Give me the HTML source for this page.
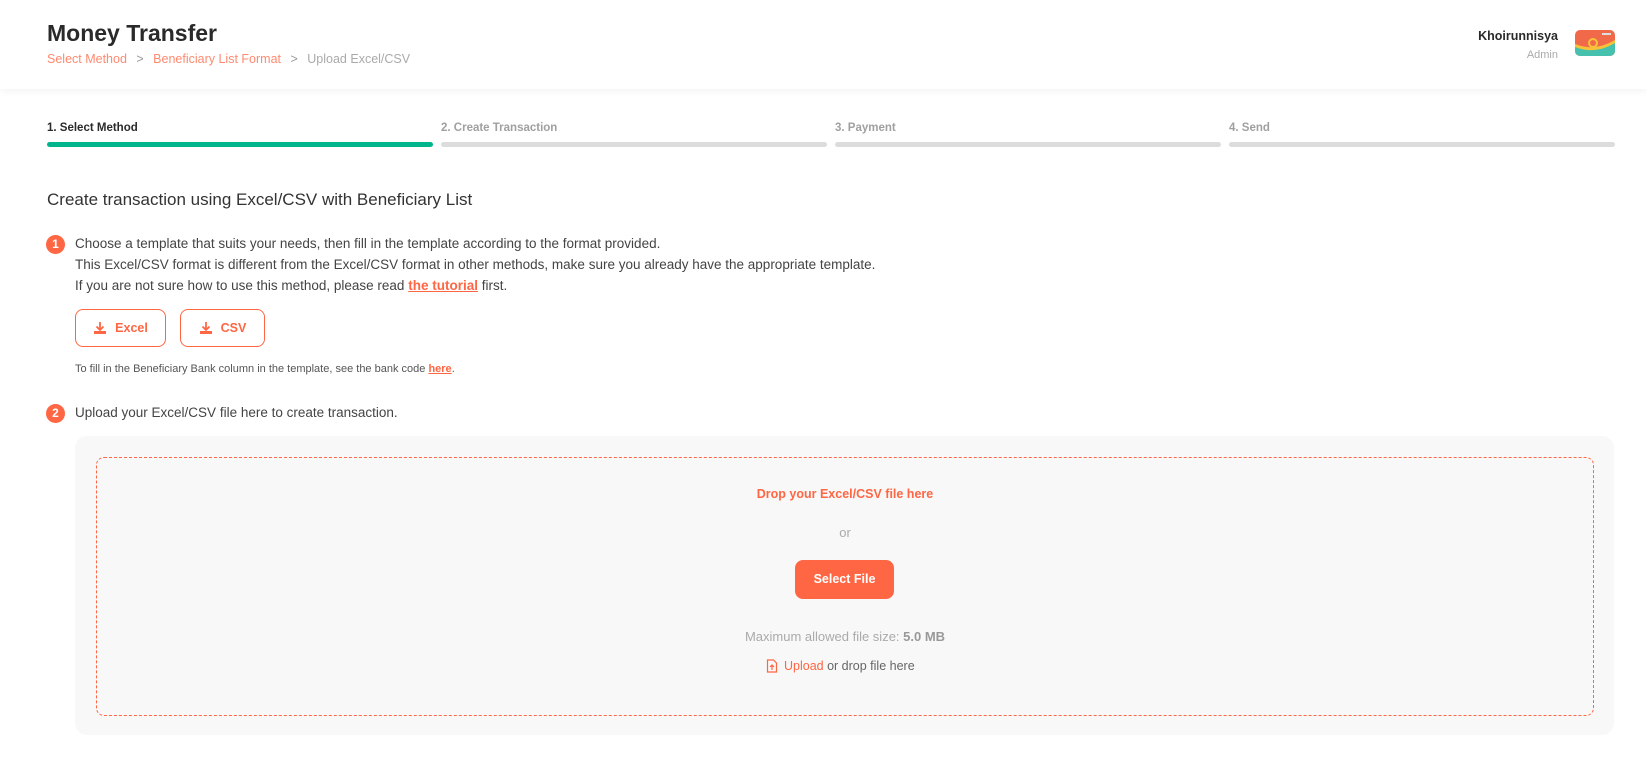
<!DOCTYPE html>
<html><head><meta charset="utf-8"><style>
*{box-sizing:border-box;margin:0;padding:0}
body{width:1647px;height:772px;background:#fff;font-family:"Liberation Sans",sans-serif;color:#333;position:relative;overflow:hidden}
.a{position:absolute;white-space:nowrap}
.hdr{position:absolute;left:0;top:0;width:1647px;height:89px;background:#fff;box-shadow:0 2px 8px rgba(0,0,0,0.05)}
.bar{position:absolute;top:142px;height:5px;border-radius:3px;background:#dcdcdc}
.lbl{position:absolute;top:122px;font-size:11.5px;font-weight:bold;color:#a0a0a0}
.num{position:absolute;width:19px;height:19px;border-radius:50%;background:#ff6643;color:#fff;font-size:12px;font-weight:bold;text-align:center;line-height:19px}
.t{font-size:13.5px;color:#444}
.btn{position:absolute;top:309px;height:38px;border:1px solid #ff6643;border-radius:8px;color:#ff6643;font-weight:bold;font-size:12.5px;display:flex;align-items:center;justify-content:center;gap:8px}
</style></head><body>
<div class="hdr"></div>
<div class="a" style="left:47px;top:20px;font-size:23px;font-weight:bold;color:#2a2a2a">Money Transfer</div>
<div class="a" style="left:47px;top:52px;font-size:12.5px;color:#ff8a70">Select Method <span style="color:#999;margin:0 6px">&gt;</span> Beneficiary List Format <span style="color:#999;margin:0 6px">&gt;</span> <span style="color:#aaa">Upload Excel/CSV</span></div>
<div class="a" style="right:89px;top:29px;font-size:12.5px;font-weight:bold;color:#2a2a2a">Khoirunnisya</div>
<div class="a" style="right:89px;top:49px;font-size:11px;color:#aaa">Admin</div>
<svg class="a" style="left:1575px;top:30px" width="40" height="26" viewBox="0 0 40 26"><rect width="40" height="26" rx="5" fill="#f06a4a"/><path d="M0 16 Q20 24 40 12 V21 a5 5 0 0 1-5 5 H5 a5 5 0 0 1-5-5Z" fill="#45c1ad"/><path d="M0 14 Q20 22 40 10 V13 Q20 25 0 17Z" fill="#f7c23a"/><circle cx="18" cy="13" r="4" fill="none" stroke="#f7c23a" stroke-width="2"/><rect x="27" y="3" width="9" height="2" fill="#ddd"/></svg>

<div class="lbl" style="left:47px;color:#2a2a2a">1. Select Method</div>
<div class="lbl" style="left:441px">2. Create Transaction</div>
<div class="lbl" style="left:835px">3. Payment</div>
<div class="lbl" style="left:1229px">4. Send</div>
<div class="bar" style="left:47px;width:386px;background:#00b58b"></div>
<div class="bar" style="left:441px;width:386px"></div>
<div class="bar" style="left:835px;width:386px"></div>
<div class="bar" style="left:1229px;width:386px"></div>

<div class="a" style="left:47px;top:190px;font-size:17px;color:#333">Create transaction using Excel/CSV with Beneficiary List</div>
<div class="num" style="left:46px;top:235px">1</div>
<div class="a t" style="left:75px;top:236px">Choose a template that suits your needs, then fill in the template according to the format provided.</div>
<div class="a t" style="left:75px;top:257px">This Excel/CSV format is different from the Excel/CSV format in other methods, make sure you already have the appropriate template.</div>
<div class="a t" style="left:75px;top:278px">If you are not sure how to use this method, please read <b style="color:#ff6643;text-decoration:underline">the tutorial</b> first.</div>
<div class="btn" style="left:75px;width:91px"><svg width="14" height="14" viewBox="0 0 14 14"><path d="M7 1v8M3.5 5.5L7 9l3.5-3.5" stroke="#ff6643" stroke-width="1.8" fill="none"/><path d="M1 10h12v3H1z" fill="#ff6643"/></svg>Excel</div>
<div class="btn" style="left:180px;width:85px"><svg width="14" height="14" viewBox="0 0 14 14"><path d="M7 1v8M3.5 5.5L7 9l3.5-3.5" stroke="#ff6643" stroke-width="1.8" fill="none"/><path d="M1 10h12v3H1z" fill="#ff6643"/></svg>CSV</div>
<div class="a" style="left:75px;top:363px;font-size:11px;color:#555">To fill in the Beneficiary Bank column in the template, see the bank code <b style="color:#ff6643;text-decoration:underline">here</b>.</div>
<div class="num" style="left:46px;top:404px">2</div>
<div class="a t" style="left:75px;top:405px">Upload your Excel/CSV file here to create transaction.</div>

<div class="a" style="left:75px;top:436px;width:1539px;height:299px;background:#f8f8f8;border-radius:12px"></div>
<div class="a" style="left:96px;top:457px;width:1498px;height:259px;border:1px dashed #ff6643;border-radius:8px"></div>
<div class="a" style="left:0;width:1690px;text-align:center;top:487px;font-size:12.5px;font-weight:bold;color:#ff6643">Drop your Excel/CSV file here</div>
<div class="a" style="left:0;width:1690px;text-align:center;top:525px;font-size:13px;color:#aaa">or</div>
<div class="a" style="left:795px;top:560px;width:99px;height:39px;background:#ff6643;border-radius:8px;color:#fff;font-weight:bold;font-size:12.5px;text-align:center;line-height:39px">Select File</div>
<div class="a" style="left:0;width:1690px;text-align:center;top:629px;font-size:13px;color:#aaa">Maximum allowed file size: <b style="color:#999">5.0 MB</b></div>
<div class="a" style="left:766px;top:659px;font-size:12.5px;color:#666;display:flex;align-items:center;gap:6px"><svg width="12" height="14" viewBox="0 0 12 14"><path d="M1.5 1h6l3 3v9h-9z" fill="none" stroke="#ff6643" stroke-width="1.2"/><path d="M6 11V6M4 8l2-2 2 2" fill="none" stroke="#ff6643" stroke-width="1.2"/></svg><span><span style="color:#ff6643">Upload</span> or drop file here</span></div>
</body></html>
